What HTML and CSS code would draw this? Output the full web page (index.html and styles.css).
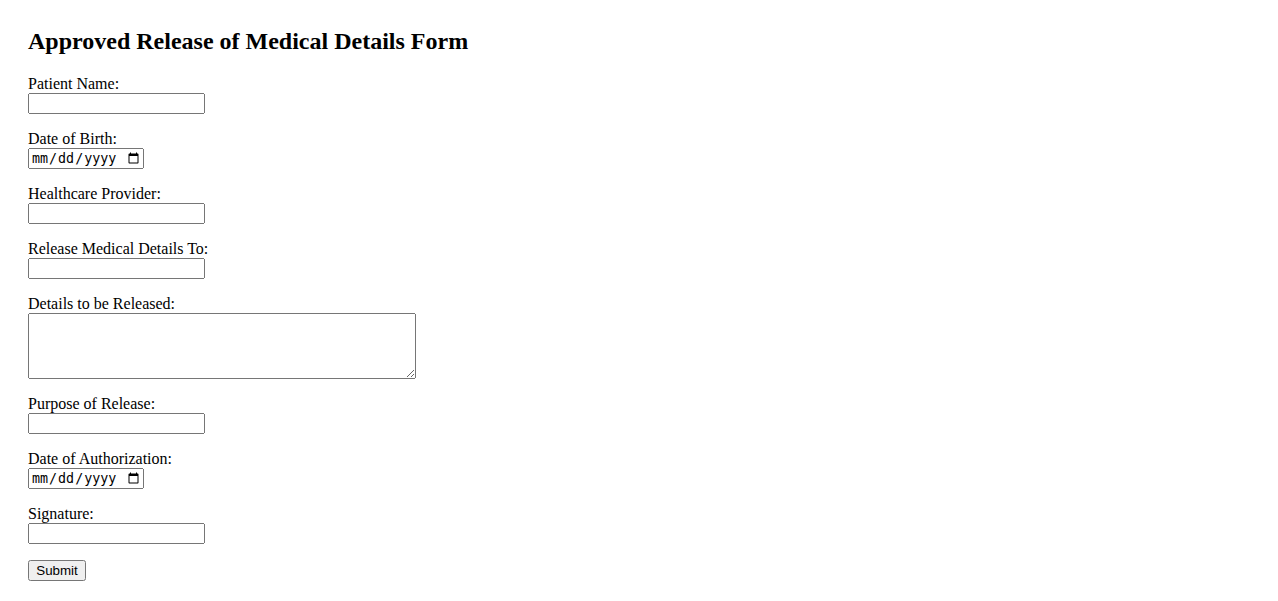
FILE: index.html
```html
<!DOCTYPE html>
<html>
<head>
<meta charset="utf-8">
<title>Approved Release of Medical Details Form</title>
<link rel="stylesheet" href="styles.css">
</head>
<body>
<div class="page">
  <h2 class="title">Approved Release of Medical Details Form</h2>
  <form class="form">
    <div class="group">
      <label class="label" for="pn">Patient Name:</label>
      <input class="text" type="text" id="pn">
    </div>
    <div class="group">
      <label class="label" for="dob">Date of Birth:</label>
      <input class="date" type="date" id="dob">
    </div>
    <div class="group">
      <label class="label" for="hp">Healthcare Provider:</label>
      <input class="text" type="text" id="hp">
    </div>
    <div class="group">
      <label class="label" for="rt">Release Medical Details To:</label>
      <input class="text" type="text" id="rt">
    </div>
    <div class="group">
      <label class="label" for="dr">Details to be Released:</label>
      <textarea class="area" id="dr" rows="4" cols="50"></textarea>
    </div>
    <div class="group">
      <label class="label" for="pr">Purpose of Release:</label>
      <input class="text" type="text" id="pr">
    </div>
    <div class="group">
      <label class="label" for="da">Date of Authorization:</label>
      <input class="date" type="date" id="da">
    </div>
    <div class="group">
      <label class="label" for="sg">Signature:</label>
      <input class="text" type="text" id="sg">
    </div>
    <button class="submit" type="submit">Submit</button>
  </form>
</div>
</body>
</html>
```
FILE: styles.css
```css
body {
  margin: 0;
  font-family: "Liberation Serif", "Times New Roman", serif;
  font-size: 16px;
  color: #000;
  background: #fff;
}
.page {
  padding: 28px;
}
.title {
  margin: 0 0 20px 0;
  font-size: 24px;
  font-weight: bold;
}
.group {
  margin-bottom: 16px;
}
.label {
  display: block;
}
.text {
  box-sizing: border-box;
  width: 177px;
  height: 21px;
}
.date {
  box-sizing: border-box;
  width: 116px;
  height: 21px;
}
.area {
  display: block;
  box-sizing: border-box;
  width: 388px;
  height: 66px;
  margin: 0;
}
.submit {
  box-sizing: border-box;
  width: 58px;
  height: 21px;
  font-family: "Liberation Sans", Arial, sans-serif;
}
```
